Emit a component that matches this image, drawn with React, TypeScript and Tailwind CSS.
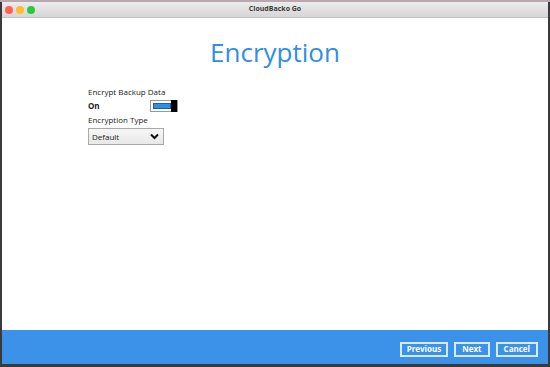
export default function App() {
  return (
    <div className="w-[550px] h-[367px] bg-[#3a3a3c] overflow-hidden" style={{ fontFamily: '"Open Sans", "Liberation Sans", sans-serif' }}>
      <div className="h-[2px] bg-[#b9a8b0]" />
      <div className="ml-[2px] mr-[2px] h-[362px] flex flex-col bg-white">
        <div className="h-[16px] flex items-center bg-gradient-to-b from-[#ececec] to-[#d6d6d6] border-b border-[#c4c4c4] relative">
          <div className="flex gap-[3px] pl-[3px]">
            <span className="w-[8px] h-[8px] rounded-full bg-[#fe5f57]" />
            <span className="w-[8px] h-[8px] rounded-full bg-[#febc2e]" />
            <span className="w-[8px] h-[8px] rounded-full bg-[#28c840]" />
          </div>
          <div className="absolute inset-0 flex items-center justify-center text-[7px] font-bold text-[#3b3b3b]">CloudBacko Go</div>
        </div>
        <div className="flex-1 flex flex-col">
          <h1 className="text-center text-[26px] leading-none text-[#2f8ee8] mt-[21px]">Encryption</h1>
          <div className="ml-[86px] mt-[22px] flex flex-col text-[8px] text-[#222]">
            <div className="leading-[10px]">Encrypt Backup Data</div>
            <div className="flex items-center mt-[3px]">
              <span className="font-bold w-[62px]">On</span>
              <span className="w-[28px] h-[12px] flex items-center border border-[#999] bg-white">
                <span className="ml-[2px] w-[18px] h-[6px] bg-[#2f8ee8] border border-[#1a5fa8]" />
                <span className="ml-auto w-[6px] h-[12px] bg-black" />
              </span>
            </div>
            <div className="leading-[10px] mt-[3px]">Encryption Type</div>
            <div className="mt-[3px] w-[76px] h-[17px] flex items-center border border-[#a9a9a9] bg-gradient-to-b from-[#f6f6f6] to-[#e8e8e8]">
              <span className="pl-[3px] flex-1">Default</span>
              <svg width="9" height="7" viewBox="0 0 9 7" className="mr-[4px]">
                <path d="M1 1.5 L4.5 5 L8 1.5" stroke="#111" strokeWidth="2" fill="none" />
              </svg>
            </div>
          </div>
        </div>
        <div className="h-[34px] bg-[#3b92e8] flex items-center justify-end gap-[6px] pr-[10px] pt-[4px]">
          <button className="h-[15px] px-[5px] border-2 border-white/80 text-white text-[8px] font-bold leading-none">Previous</button>
          <button className="h-[15px] px-[6px] border-2 border-white/80 text-white text-[8px] font-bold leading-none">Next</button>
          <button className="h-[15px] px-[6px] border-2 border-white/80 text-white text-[8px] font-bold leading-none">Cancel</button>
        </div>
      </div>
    </div>
  );
}
